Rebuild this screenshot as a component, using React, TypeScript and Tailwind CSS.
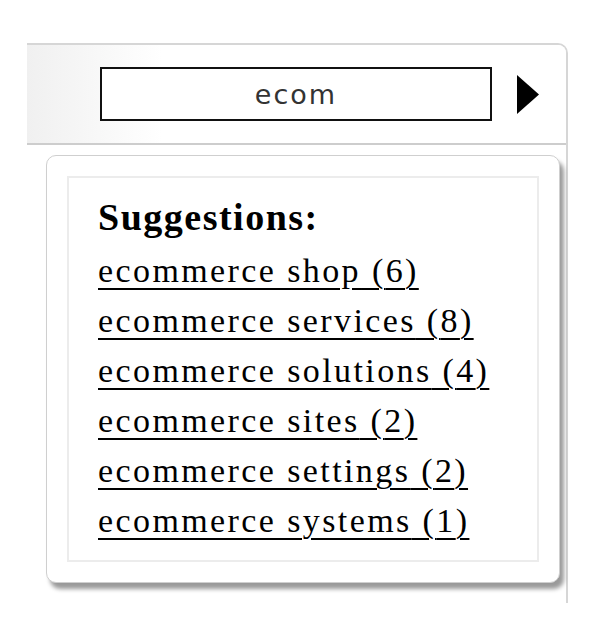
import React from 'react';

const suggestions = [
  { label: 'ecommerce shop', count: 6 },
  { label: 'ecommerce services', count: 8 },
  { label: 'ecommerce solutions', count: 4 },
  { label: 'ecommerce sites', count: 2 },
  { label: 'ecommerce settings', count: 2 },
  { label: 'ecommerce systems', count: 1 },
];

const serif = { fontFamily: '"Liberation Serif", "Times New Roman", serif' };

const App: React.FC = () => {
  return (
    <div className="w-[610px] h-[642px] bg-white pt-[43px] pl-[27px]">
      <div className="w-[541px] h-[560px] border-t-2 border-r-2 border-[#d6d6d6] rounded-tr-[10px]">
        {/* search bar */}
        <div className="h-[100px] flex items-center pl-[73px] border-b-2 border-[#cdcdcd] rounded-tr-[8px] bg-gradient-to-r from-[#f0f0f0] via-white via-[25%] to-white">
          <input
            type="text"
            defaultValue="ecom"
            className="w-[392px] h-[54px] border-2 border-[#111] bg-white text-center text-[27px] tracking-[2px] text-[#333] outline-none"
            style={{ fontFamily: '"DejaVu Sans", Verdana, sans-serif' }}
          />
          <svg width="22" height="39" viewBox="0 0 22 39" className="ml-[25px]">
            <polygon points="0,0 22,19.5 0,39" fill="#000" />
          </svg>
        </div>

        {/* suggestions dropdown */}
        <div className="ml-[19px] mt-[10px] w-[514px] h-[428px] p-[20px] bg-white border border-[#cfcfcf] rounded-[10px] shadow-[4px_6px_4px_rgba(0,0,0,0.4)]">
          <div className="h-full border-2 border-[#ececec] pl-[29px] pt-[15px]" style={serif}>
            <div className="text-[38px] leading-[49px] tracking-[1.5px] font-bold text-black mb-[4px]">Suggestions:</div>
            <ul className="flex flex-col">
              {suggestions.map((s) => (
                <li key={s.label} className="text-[34px] leading-[50px] h-[50px]">
                  <a
                    href="#"
                    className="tracking-[2.4px] text-black underline decoration-2 underline-offset-[6px]"
                  >
                    {s.label} ({s.count})
                  </a>
                </li>
              ))}
            </ul>
          </div>
        </div>
      </div>
    </div>
  );
};

export default App;
